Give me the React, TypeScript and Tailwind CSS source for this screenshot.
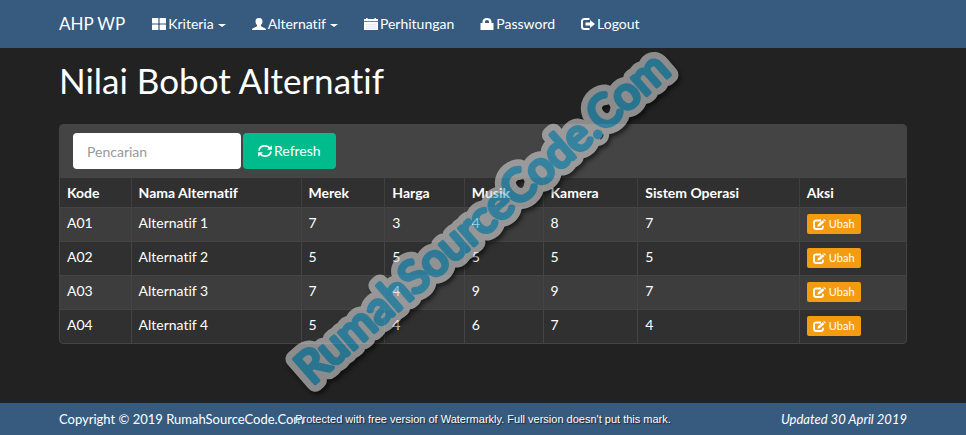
import React from "react";

type IconProps = { className?: string };

const iconBase = "inline-block shrink-0 fill-current";

function GridIcon() {
  return (
    <svg viewBox="0 0 14 12" className={`${iconBase} h-3 w-3.5`} aria-hidden="true">
      <rect x="0" y="0" width="6.4" height="5.4" rx="0.5" />
      <rect x="7.6" y="0" width="6.4" height="5.4" rx="0.5" />
      <rect x="0" y="6.6" width="6.4" height="5.4" rx="0.5" />
      <rect x="7.6" y="6.6" width="6.4" height="5.4" rx="0.5" />
    </svg>
  );
}

function UserIcon() {
  return (
    <svg viewBox="0 0 14 12" className={`${iconBase} h-3 w-3.5`} aria-hidden="true">
      <path d="M7 0C9.300 0 10.500 1.200 10.500 3.300C10.500 5 9.800 6.300 9 7v1c0 .5 1 .9 2.300 1.500C13.200 10.200 14 10.600 14 12H0c0-1.400.8-1.800 2.700-2.500C4 8.900 5 8.500 5 8V7C4.200 6.300 3.500 5 3.500 3.300C3.500 1.200 4.700 0 7 0Z" />
    </svg>
  );
}

function CalendarIcon() {
  return (
    <svg viewBox="0 0 14 12" className={`${iconBase} h-3 w-3.5`} aria-hidden="true">
      <path d="M0 1h2V0h1.600v1h6.800V0H12v1h2v2H0Z" />
      <path d="M0 3.700h14V11.500a.5.5 0 0 1-.5.5H.5a.5.5 0 0 1-.5-.5Z" />
      <path d="M1.500 6.200h11M1.500 8.200h11M1.500 10.200h11" stroke="#375a7f" strokeWidth="0.5" opacity="0.35" />
    </svg>
  );
}

function LockIcon() {
  return (
    <svg viewBox="0 0 14 12" className={`${iconBase} h-3 w-3.5`} aria-hidden="true">
      <path d="M0.500 5H2.500V4C2.500 1.500 4.200 0 7 0s4.500 1.500 4.500 4v1h2v6.500a.5.5 0 0 1-.5.5H1a.5.5 0 0 1-.5-.5ZM5 5h4V4c0-1.300-.7-2-2-2s-2 .7-2 2Z" />
    </svg>
  );
}

function LogoutIcon() {
  return (
    <svg viewBox="0 0 14 12" className={`${iconBase} h-3 w-3.5`} aria-hidden="true">
      <path d="M8.500 1H3.500Q1 1 1 3.300V8.700Q1 11 3.500 11H8.500" fill="none" stroke="currentColor" strokeWidth="1.900" />
      <path d="M4.500 4.500H9V2l5 4-5 4V7.500H4.500Z" />
    </svg>
  );
}

function RefreshIcon() {
  return (
    <svg viewBox="0 0 14 12" className={`${iconBase} h-3 w-3.5`} aria-hidden="true">
      <path d="M1 5.600C1.400 2.600 4 .9 7 .9c2 0 3.800.8 5 2.300M13 6.400C12.600 9.400 10 11.100 7 11.100c-2 0-3.800-.8-5-2.300" fill="none" stroke="currentColor" strokeWidth="1.700" />
      <path d="M13.900.3v4.500H9ZM.1 11.700V7.200h4.900Z" />
    </svg>
  );
}

function EditIcon() {
  return (
    <svg viewBox="0 0 13 11" className={`${iconBase} h-[11px] w-[13px]`} aria-hidden="true">
      <path d="M8 1.500H3.300Q1 1.500 1 3.500V8Q1 10 3.300 10H7.700Q10 10 10 8V6.800" fill="none" stroke="currentColor" strokeWidth="1.800" />
      <path d="M4.300 7.800 5 5.200 9.600 1.200 11.500 2.900 7 7ZM10.200.7 11 0l2 1.700-.8.7Z" />
    </svg>
  );
}

function Caret({ className = "" }: IconProps) {
  return <span className={`mt-0.5 border-x-4 border-t-[3px] border-x-transparent border-t-white ${className}`} />;
}

type NavItem = { label: string; icon: React.ReactNode; menu?: boolean };

const navItems: NavItem[] = [
  { label: "Kriteria", icon: <GridIcon />, menu: true },
  { label: "Alternatif", icon: <UserIcon />, menu: true },
  { label: "Perhitungan", icon: <CalendarIcon /> },
  { label: "Password", icon: <LockIcon /> },
  { label: "Logout", icon: <LogoutIcon /> },
];

const columns = [
  { label: "Kode", width: "w-[8.4%]" },
  { label: "Nama Alternatif", width: "w-[20.1%]" },
  { label: "Merek", width: "w-[9.9%]" },
  { label: "Harga", width: "w-[9.4%]" },
  { label: "Musik", width: "w-[9.3%]" },
  { label: "Kamera", width: "w-[11.2%]" },
  { label: "Sistem Operasi", width: "w-[19.1%]" },
  { label: "Aksi", width: "w-[12.6%]" },
];

const rows = [
  ["A01", "Alternatif 1", "7", "3", "4", "8", "7"],
  ["A02", "Alternatif 2", "5", "5", "5", "5", "5"],
  ["A03", "Alternatif 3", "7", "4", "9", "9", "7"],
  ["A04", "Alternatif 4", "5", "4", "6", "7", "4"],
];

function Watermark() {
  return (
    <svg
      viewBox="0 0 460 400"
      className="pointer-events-none absolute top-[22px] left-[256px] h-[400px] w-[460px] overflow-visible opacity-60 drop-shadow-[2px_3px_2px_rgba(0,0,0,0.9)]"
    >
      <g
        transform="translate(56 364) rotate(-41)"
        fontFamily="Lato, sans-serif"
        fontSize="45"
        fontWeight="400"
        strokeLinejoin="round"
        strokeLinecap="round"
      >
        <text fill="#d3d3d3" stroke="#d3d3d3" strokeWidth="17" aria-hidden="true">RumahSourceCode.Com</text>
        <text fill="#2facda" stroke="#2facda" strokeWidth="4">RumahSourceCode.Com</text>
      </g>
    </svg>
  );
}

export default function App() {
  return (
    <div className="relative flex min-h-screen flex-col bg-[#222] font-['Lato',sans-serif] text-sm text-white [font-variant-ligatures:none]">
      <nav className="h-12 bg-[#375a7f] px-[59px]">
        <div className="flex h-full items-center">
          <a href="#" className="mr-[27px] text-[17px] leading-6">AHP WP</a>
          <ul className="flex items-center gap-[26px]">
            {navItems.map((item) => (
              <li key={item.label}>
                <a href="#" className="flex items-center gap-0.5">
                  {item.icon}
                  <span>{item.label}</span>
                  {item.menu && <Caret className="ml-0.5" />}
                </a>
              </li>
            ))}
          </ul>
        </div>
      </nav>

      <main className="flex-1 px-[59px] pt-3">
        <h1 className="text-[35px] leading-10">Nilai Bobot Alternatif</h1>
        <section className="mt-6 overflow-hidden rounded border border-[#444] bg-[#303030]">
          <form className="flex gap-0.5 bg-[#444] px-[13px] pt-2 pb-[9px]" onSubmit={(e) => e.preventDefault()}>
            <input
              type="text"
              aria-label="Pencarian"
              placeholder="Pencarian"
              className="h-9 w-[168px] rounded bg-white px-3.5 text-sm text-gray-800 placeholder:text-[#999]"
            />
            <button type="submit" className="flex h-9 items-center gap-0.5 rounded bg-[#00bc8c] px-[15px]">
              <RefreshIcon />
              Refresh
            </button>
          </form>
          <table className="w-full table-fixed border-collapse text-left">
            <thead>
              <tr className="h-[29px]">
                {columns.map((column) => (
                  <th key={column.label} className={`${column.width} border-r border-[#3f3f3f] px-[7px] pt-0.5 font-bold last:border-r-0`}>
                    {column.label}
                  </th>
                ))}
              </tr>
            </thead>
            <tbody>
              {rows.map((row) => (
                <tr key={row[0]} className="h-[34px] border-t border-[#444] odd:bg-[#3d3d3d]">
                  {row.map((cell, index) => (
                    <td key={index} className="border-r border-[#444] px-[7px] pt-[5px] pb-[7px]">{cell}</td>
                  ))}
                  <td className="px-[7px]">
                    <button type="button" className="flex h-5 items-center gap-[3px] rounded-xs bg-[#f39c12] px-1.5 text-[11px]">
                      <EditIcon />
                      Ubah
                    </button>
                  </td>
                </tr>
              ))}
            </tbody>
          </table>
        </section>
      </main>

      <footer className="relative flex h-8 items-center justify-between bg-[#375a7f] px-[59px] text-[13px]">
        <p>Copyright © 2019 RumahSourceCode.Com</p>
        <em>Updated 30 April 2019</em>
        <p className="absolute inset-x-0 top-2 text-center font-['Liberation_Sans',Arial,sans-serif] text-[11px] leading-4 [text-shadow:1px_1px_1px_rgba(0,0,0,0.6)]">
          Protected with free version of Watermarkly. Full version doesn't put this mark.
        </p>
      </footer>

      <Watermark />
    </div>
  );
}
